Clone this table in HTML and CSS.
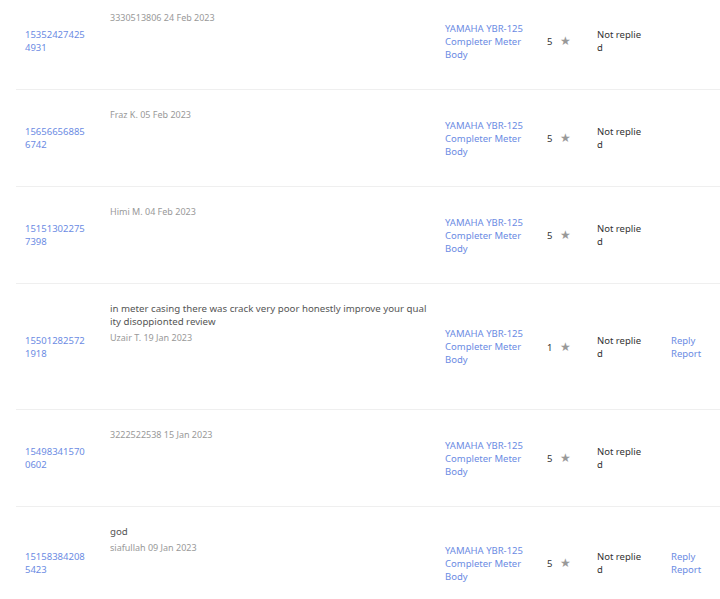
FILE: index.html
```html
<!DOCTYPE html>
<html>
<head>
  <meta charset="UTF-8">
  <title>Reviews</title>
  <link rel="stylesheet" href="styles.css">
</head>
<body>
  <table class="reviews">
    <colgroup>
      <col class="c-id"><col class="c-review"><col class="c-product"><col class="c-rating"><col class="c-status"><col class="c-action">
    </colgroup>
    <tr>
      <td class="order"><a href="#">153524274254931</a></td>
      <td class="review"><div class="meta">3330513806 24 Feb 2023</div></td>
      <td><a href="#">YAMAHA YBR-125 Completer Meter Body</a></td>
      <td class="rating">5 <span class="star">&#9733;</span></td>
      <td class="status">Not replied</td>
      <td class="actions"></td>
    </tr>
    <tr>
      <td class="order"><a href="#">156566568856742</a></td>
      <td class="review"><div class="meta">Fraz K. 05 Feb 2023</div></td>
      <td><a href="#">YAMAHA YBR-125 Completer Meter Body</a></td>
      <td class="rating">5 <span class="star">&#9733;</span></td>
      <td class="status">Not replied</td>
      <td class="actions"></td>
    </tr>
    <tr>
      <td class="order"><a href="#">151513022757398</a></td>
      <td class="review"><div class="meta">Himi M. 04 Feb 2023</div></td>
      <td><a href="#">YAMAHA YBR-125 Completer Meter Body</a></td>
      <td class="rating">5 <span class="star">&#9733;</span></td>
      <td class="status">Not replied</td>
      <td class="actions"></td>
    </tr>
    <tr>
      <td class="order"><a href="#">155012825721918</a></td>
      <td class="review">
        <div class="comment">in meter casing there was crack very poor honestly improve your quality disoppionted review</div>
        <div class="meta">Uzair T. 19 Jan 2023</div>
      </td>
      <td><a href="#">YAMAHA YBR-125 Completer Meter Body</a></td>
      <td class="rating">1 <span class="star">&#9733;</span></td>
      <td class="status">Not replied</td>
      <td class="actions"><a href="#">Reply</a><a href="#">Report</a></td>
    </tr>
    <tr>
      <td class="order"><a href="#">154983415700602</a></td>
      <td class="review"><div class="meta">3222522538 15 Jan 2023</div></td>
      <td><a href="#">YAMAHA YBR-125 Completer Meter Body</a></td>
      <td class="rating">5 <span class="star">&#9733;</span></td>
      <td class="status">Not replied</td>
      <td class="actions"></td>
    </tr>
    <tr>
      <td class="order"><a href="#">151583842085423</a></td>
      <td class="review">
        <div class="comment">god</div>
        <div class="meta">siafullah 09 Jan 2023</div>
      </td>
      <td><a href="#">YAMAHA YBR-125 Completer Meter Body</a></td>
      <td class="rating">5 <span class="star">&#9733;</span></td>
      <td class="status">Not replied</td>
      <td class="actions"><a href="#">Reply</a><a href="#">Report</a></td>
    </tr>
  </table>
</body>
</html>
```
FILE: styles.css
```css
body {
  margin: 0;
  font-family: "Noto Sans", "Open Sans", sans-serif;
  font-size: 9.5px;
  line-height: 13px;
  color: #333;
  background: #fff;
  overflow: hidden;
}

a {
  color: #6b8be3;
  text-decoration: none;
}

.reviews {
  margin: -7px 0 0 16px;
  width: 720px;
  border-collapse: collapse;
  table-layout: fixed;
}

.c-id { width: 85px; }
.c-review { width: 335px; }
.c-product { width: 102px; }
.c-rating { width: 50px; }
.c-status { width: 74px; }
.c-action { width: 74px; }

.reviews td {
  padding: 0 8px 0 9px;
  vertical-align: middle;
  border-bottom: 1px solid #efefef;
}

.reviews td.order {
  padding-right: 13px;
  word-break: break-all;
}

.reviews td.review {
  vertical-align: top;
  padding-top: 18px;
  padding-bottom: 65px;
}

.comment {
  color: #555;
  font-size: 9.7px;
  word-break: break-all;
}

.meta {
  color: #999;
  font-size: 9px;
}

.comment + .meta {
  margin-top: 3px;
}

.rating {
  white-space: nowrap;
}

.star {
  color: #999;
  font-size: 11.5px;
  margin-left: 5px;
}

.reviews td.status {
  padding-right: 18px;
  word-break: break-all;
}

.actions a {
  display: block;
}
```
